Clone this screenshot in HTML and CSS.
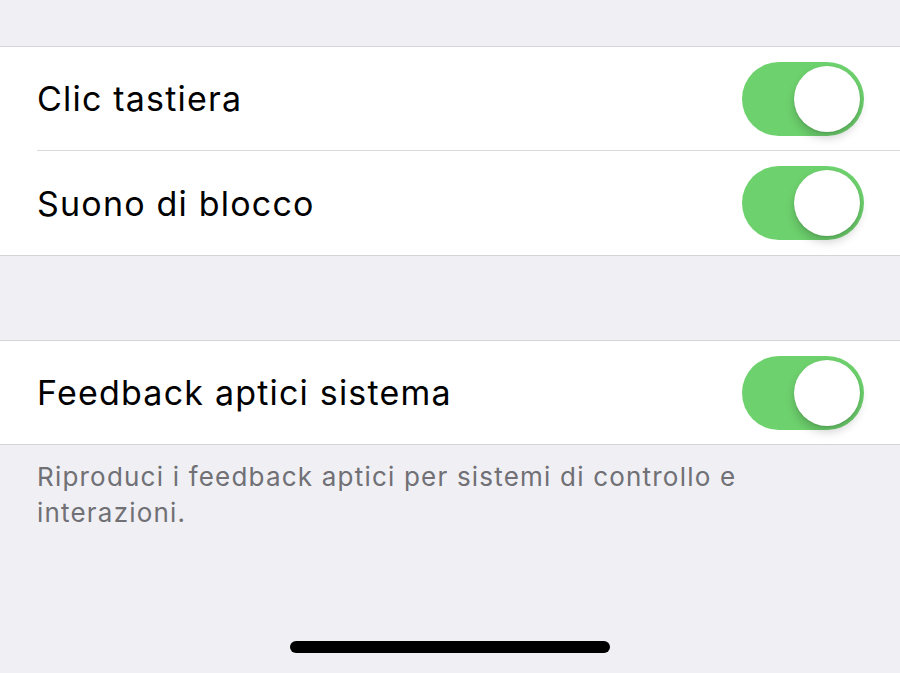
FILE: index.html
```html
<!DOCTYPE html>
<html lang="it">
<head>
<meta charset="utf-8">
<link rel="stylesheet" href="styles.css">
</head>
<body>
<div class="screen">
  <div class="top-space"></div>
  <div class="group">
    <div class="row">
      <span class="label">Clic tastiera</span>
      <span class="toggle"><span class="knob"></span></span>
    </div>
    <div class="row">
      <span class="label">Suono di blocco</span>
      <span class="toggle"><span class="knob"></span></span>
    </div>
  </div>
  <div class="gap"></div>
  <div class="group">
    <div class="row">
      <span class="label">Feedback aptici sistema</span>
      <span class="toggle"><span class="knob"></span></span>
    </div>
  </div>
  <p class="footer">Riproduci i feedback aptici per sistemi di controllo e interazioni.</p>
  <div class="home-indicator"></div>
</div>
</body>
</html>
```
FILE: styles.css
```css
html, body {
  margin: 0;
  padding: 0;
}
body {
  background: #efeff4;
  font-family: Inter, "Noto Sans", "Liberation Sans", sans-serif;
  -webkit-font-smoothing: antialiased;
}
.screen {
  height: 673px;
  display: flex;
  flex-direction: column;
  overflow: hidden;
}
.top-space {
  height: 46px;
  flex: none;
}
.group {
  background: #fff;
  border-top: 1px solid #d4d3d8;
  border-bottom: 1px solid #d4d3d8;
  flex: none;
}
.row {
  height: 103px;
  margin-left: 37px;
  padding-right: 36px;
  display: flex;
  align-items: center;
  justify-content: space-between;
}
.row + .row {
  border-top: 1px solid #d9d8dc;
  height: 104px;
}
.label {
  font-size: 34px;
  color: #000;
  letter-spacing: 1.2px;
}
.toggle {
  position: relative;
  width: 122px;
  height: 74px;
  border-radius: 37px;
  background: #6dd16d;
  flex: none;
}
.knob {
  position: absolute;
  right: 4px;
  top: 4px;
  width: 66px;
  height: 66px;
  border-radius: 50%;
  background: #fff;
  box-shadow: 0 6px 10px rgba(0,0,0,0.18), 0 1px 2px rgba(0,0,0,0.1);
}
.gap {
  height: 84px;
  flex: none;
}
.footer {
  margin: 0;
  padding: 14px 37px 0 37px;
  font-size: 26px;
  line-height: 36px;
  letter-spacing: 1.2px;
  color: #707075;
}
.home-indicator {
  margin: auto auto 20px;
  width: 320px;
  height: 12px;
  border-radius: 6px;
  background: #000;
  flex: none;
}
```
